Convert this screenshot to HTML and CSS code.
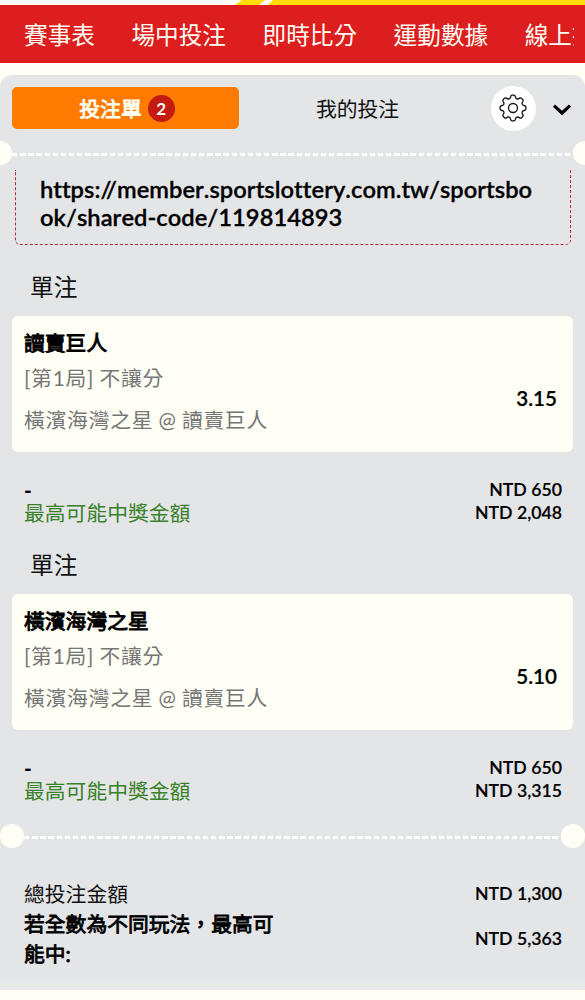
FILE: index.html
```html
<!DOCTYPE html>
<html lang="zh-Hant">
<head>
<meta charset="utf-8">
<title>投注單</title>
<link rel="stylesheet" href="styles.css">
</head>
<body>
<div class="banner"><svg width="585" height="5" viewBox="0 0 585 5"><path d="M235 5L242 0H265L259 5ZM268 5L273 0H585V5Z" fill="#ffdc00"/></svg></div>
<nav class="nav"><a>賽事表</a><a>場中投注</a><a>即時比分</a><a>運動數據</a><a>線上投注</a></nav>
<main class="slip">
  <header class="tabs">
    <button class="tab tab-active">投注單<span class="count">2</span></button>
    <button class="tab tab-mine">我的投注</button>
    <button class="settings" aria-label="設定">
      <svg width="28" height="28" viewBox="-14 -14 28 28" fill="none" stroke="#111" stroke-width="1.3">
        <defs><path id="tooth" d="M-3.79-9.15C-2.9-9.52-2.5-10.2-2.25-11.7Q-2-12.9-.9-12.9H.9Q2-12.9 2.25-11.7C2.5-10.2 2.9-9.52 3.79-9.15"/></defs>
        <use href="#tooth"/><use href="#tooth" transform="rotate(45)"/><use href="#tooth" transform="rotate(90)"/><use href="#tooth" transform="rotate(135)"/><use href="#tooth" transform="rotate(180)"/><use href="#tooth" transform="rotate(225)"/><use href="#tooth" transform="rotate(270)"/><use href="#tooth" transform="rotate(315)"/>
        <circle r="4.5"/>
      </svg>
    </button>
    <svg class="chevron" width="20" height="14" viewBox="0 0 20 14"><path d="M2 2.6L10 10L18 2.6" fill="none" stroke="#000" stroke-width="3.2"/></svg>
  </header>
  <div class="divider divider-edge"><i class="notch"></i><i class="dashes"></i><i class="notch"></i></div>
  <section class="share"><p class="link"><span class="scheme">https://</span>member.sportslottery.com.tw/sportsbo<br>ok/shared-code/119814893</p></section>

  <h2 class="kind">單注</h2>
  <article class="card">
    <div class="info"><h3 class="pick">讀賣巨人</h3><p class="market">[第1局] 不讓分</p><p class="match">橫濱海灣之星 @ 讀賣巨人</p></div>
    <span class="odds">3.15</span>
  </article>
  <div class="stake"><span class="minus">-</span><span class="money">NTD 650</span><span class="win">最高可能中獎金額</span><span class="money">NTD 2,048</span></div>

  <h2 class="kind">單注</h2>
  <article class="card">
    <div class="info"><h3 class="pick">橫濱海灣之星</h3><p class="market">[第1局] 不讓分</p><p class="match">橫濱海灣之星 @ 讀賣巨人</p></div>
    <span class="odds">5.10</span>
  </article>
  <div class="stake"><span class="minus">-</span><span class="money">NTD 650</span><span class="win">最高可能中獎金額</span><span class="money">NTD 3,315</span></div>

  <div class="divider divider-inset"><i class="notch"></i><i class="dashes"></i><i class="notch"></i></div>
  <footer class="totals">
    <div class="total"><span>總投注金額</span><span class="money">NTD 1,300</span></div>
    <div class="total total-max"><strong>若全數為不同玩法，最高可<br>能中:</strong><span class="money">NTD 5,363</span></div>
  </footer>
</main>
</body>
</html>
```
FILE: styles.css
```css
* { box-sizing: border-box; }
body {
  margin: 0;
  width: 585px;
  height: 1000px;
  overflow: hidden;
  background: #fffff5;
  color: #111;
  font-family: Lato, "Noto Sans CJK TC", sans-serif;
  font-size: 20.8px;
}
h2, h3, p { margin: 0; font-weight: 400; }
button { border: 0; padding: 0; background: none; font: inherit; color: inherit; }
svg { display: block; }

.banner { height: 5px; background: #fff; }
.nav {
  display: flex;
  gap: 36.5px;
  width: 585px;
  height: 58px;
  padding-left: 24px;
  border-right: 11px solid #dc1e1f;
  overflow: hidden;
  background: #dc1e1f;
  color: #fffff5;
  font-size: 23.65px;
  line-height: 61px;
  white-space: nowrap;
}
.nav a { flex: none; }

.slip {
  height: 915px;
  margin-top: 12px;
  border-radius: 12px 12px 0 0;
  overflow: hidden;
  background: linear-gradient(#e4e5e7 900px, #eaeaea 915px);
}
.tabs { display: flex; align-items: center; height: 66px; padding-left: 12px; }
.tab { display: flex; align-items: center; justify-content: center; height: 42px; padding-top: 1px; line-height: 42px; }
.tab-active {
  gap: 6px;
  width: 227px;
  padding-left: 3px;
  border-radius: 5px;
  background: #ff7b00;
  color: #fffff5;
  -webkit-text-stroke: .8px #fffff5;
}
.count {
  width: 27px;
  height: 27px;
  border-radius: 50%;
  background: #c31a12;
  font-size: 17px;
  font-weight: 700;
  line-height: 27px;
  text-align: center;
  -webkit-text-stroke: 0;
}
.tab-mine { width: 237px; }
.settings {
  display: flex;
  align-items: center;
  justify-content: center;
  width: 45px;
  height: 45px;
  margin-left: 15px;
  border-radius: 50%;
  background: #fff;
}
.settings svg { margin-right: 1px; }
.chevron { margin-left: 16px; margin-top: 3px; }

.divider { display: flex; align-items: center; height: 24px; }
.notch { flex: none; width: 24px; height: 24px; border-radius: 50%; background: #fffff5; }
.dashes {
  flex: 1;
  height: 3px;
  margin-top: 3px;
  background: repeating-linear-gradient(90deg, #fff 0 5.4px, transparent 5.4px 8.13px);
}
.divider-edge { margin: 0 -12px; }
.divider-inset { margin-top: 19px; }

.share {
  height: 75px;
  margin: 5px 14px 0 15px;
  padding: 5px 0 0 24px;
  border: 1px dashed #b52b37;
  border-top: 0;
  border-radius: 0 0 5px 5px;
}
.link {
  color: #000;
  font-size: 23.7px;
  font-weight: 600;
  font-variant-ligatures: none;
  font-kerning: none;
  line-height: 28px;
  white-space: nowrap;
  -webkit-text-stroke: .3px #000;
}
.scheme { font-kerning: normal; }
.scheme + br, .link { letter-spacing: .05px; }

.kind { height: 71px; padding: 24px 0 0 30px; font-size: 23.7px; line-height: 37px; }
.card {
  display: flex;
  justify-content: space-between;
  height: 136px;
  margin: 0 12px;
  padding: 8px 16px 0 12px;
  border-radius: 6px;
  background: #fffff5;
}
.pick { height: 36px; color: #000; font-size: 20.8px; line-height: 37px; -webkit-text-stroke: .9px #000; }
.market, .match { color: #767676; letter-spacing: .75px; word-spacing: -.8px; }
.market { height: 40px; line-height: 36px; }
.match { line-height: 40px; }
.odds {
  margin-top: 60px;
  color: #000;
  font-size: 20.6px;
  font-weight: 600;
  line-height: 28px;
  -webkit-text-stroke: .2px #000;
}

.stake {
  display: grid;
  grid-template-columns: 1fr auto;
  grid-template-rows: 23px 24px;
  height: 75px;
  padding: 26px 23px 0 24px;
  line-height: 24px;
}
.minus { color: #000; font-weight: 900; }
.win { color: #388129; }
.money {
  color: #000;
  font-size: 17.7px;
  font-weight: 600;
  text-align: right;
  -webkit-text-stroke: .15px #000;
}
.stake + .kind { height: 67px; padding-top: 20px; }

.totals { padding: 31px 23px 0 24px; line-height: 30px; }
.total { display: flex; justify-content: space-between; align-items: center; }
.total-max strong { color: #000; font-weight: 400; -webkit-text-stroke: .8px #000; }
```
